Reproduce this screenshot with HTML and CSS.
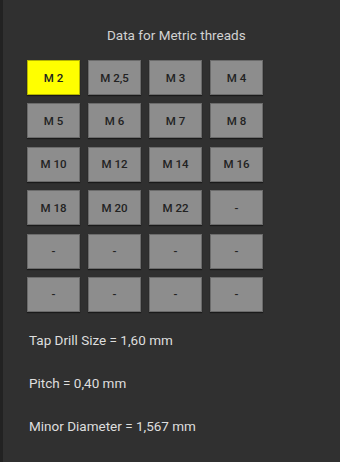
FILE: index.html
```html
<!DOCTYPE html>
<html>
<head>
<meta charset="utf-8">
<link rel="stylesheet" href="styles.css">
</head>
<body>
<div class="screen">
  <div class="edge"></div>
  <main class="content">
    <h1 class="title">Data for Metric threads</h1>
    <div class="grid">
      <div class="btn active">M 2</div>
      <div class="btn">M 2,5</div>
      <div class="btn">M 3</div>
      <div class="btn">M 4</div>
      <div class="btn">M 5</div>
      <div class="btn">M 6</div>
      <div class="btn">M 7</div>
      <div class="btn">M 8</div>
      <div class="btn">M 10</div>
      <div class="btn">M 12</div>
      <div class="btn">M 14</div>
      <div class="btn">M 16</div>
      <div class="btn">M 18</div>
      <div class="btn">M 20</div>
      <div class="btn">M 22</div>
      <div class="btn">-</div>
      <div class="btn">-</div>
      <div class="btn">-</div>
      <div class="btn">-</div>
      <div class="btn">-</div>
      <div class="btn">-</div>
      <div class="btn">-</div>
      <div class="btn">-</div>
      <div class="btn">-</div>
    </div>
    <div class="results">
      <p class="line">Tap Drill Size = 1,60 mm</p>
      <p class="line">Pitch = 0,40 mm</p>
      <p class="line">Minor Diameter = 1,567 mm</p>
    </div>
  </main>
</div>
</body>
</html>
```
FILE: styles.css
```css
html, body {
  margin: 0;
  padding: 0;
  background: #303030;
  font-family: Roboto, "Liberation Sans", sans-serif;
}
.screen {
  display: flex;
  width: 340px;
  height: 462px;
  overflow: hidden;
}
.edge {
  width: 3px;
  background: #222222;
  flex: none;
}
.content {
  flex: 1;
  padding-left: 24px;
}
.title {
  margin: 27px 0 0 0;
  padding-left: 80px;
  font-size: 13.5px;
  line-height: 16px;
  font-weight: 400;
  color: #d2d2d2;
}
.grid {
  margin-top: 17px;
  display: grid;
  grid-template-columns: repeat(4, 53px);
  grid-auto-rows: 35px;
  column-gap: 8px;
  row-gap: 8.4px;
}
.btn {
  box-sizing: border-box;
  background: #8d8d8d;
  border: 1px solid #6b6b6b;
  box-shadow: 0 1px 1px rgba(0, 0, 0, 0.45);
  display: flex;
  align-items: center;
  justify-content: center;
  font-size: 11.5px;
  font-weight: 500;
  color: #222222;
}
.btn.active {
  background: #ffff00;
  border-color: #b5b500;
}
.results {
  margin-top: 20px;
  display: flex;
  flex-direction: column;
  gap: 27px;
}
.line {
  margin: 0;
  padding-left: 2px;
  font-size: 13.5px;
  line-height: 16px;
  color: #dedede;
}
```
